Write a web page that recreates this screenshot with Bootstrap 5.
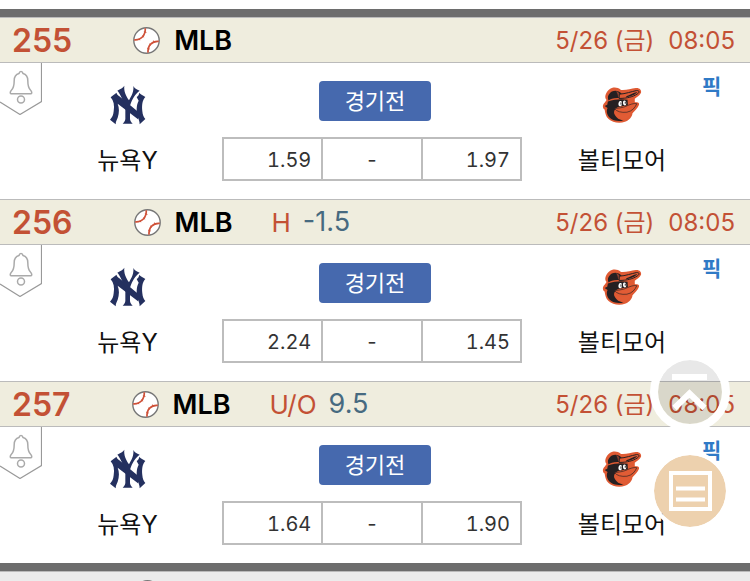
<!DOCTYPE html>
<html lang="ko">
<head>
<meta charset="utf-8">
<meta name="viewport" content="width=device-width, initial-scale=1">
<title>MLB</title>
<link href="https://cdn.jsdelivr.net/npm/bootstrap@5.3.0/dist/css/bootstrap.min.css" rel="stylesheet">
<style>
  body { font-family: Inter, "Noto Sans CJK KR", sans-serif; color: #111; background: #fff; }
  .page-shell { padding-top: 9px; }
  .divider-bar { height: 8px; background: #6d6d6d; flex-shrink: 0; }
  .game-head { background: #efedde; border-top: 1px solid #bbb; border-bottom: 1px solid #bbb; height: 46px; padding: 1px 15px 0 12px; }
  .game-head svg { margin-bottom: 1px; }
  .game-no { color: #c35135; font-size: 32px; font-weight: 600; line-height: 44px; margin-right: 61px; }
  .league { color: #000; font-size: 27px; font-weight: 600; line-height: 44px; margin-left: 14px; }
  .bet-kind { color: #c35135; font-size: 26px; margin-left: 39px; }
  .bet-line { color: #476a80; font-size: 27px; margin-left: 12px; }
  .game-time { color: #c35135; font-size: 24px; gap: 14px; padding-top: 1px; }
  .game-body { display: grid; grid-template-columns: 42px 1fr 300px 1fr 48px; }
  .team { padding-top: 22px; font-size: 24px; line-height: 30px; }
  .team svg { display: block; margin-bottom: 21px; }
  .team-home { padding-right: 9px; }
  .team-away { padding-left: 20px; }
  .center-col { padding: 18px 0; gap: 16px; }
  .state-btn { width: 112px; height: 40px; padding: 0; margin-left: 6px; border-radius: 4px; background: #4669ae; color: #fff; font-size: 22px; line-height: 40px; }
  .state-btn:hover { background: #3b5c9d; color: #fff; }
  .odds { width: 100%; height: 44px; table-layout: fixed; border-collapse: collapse; font-size: 20px; line-height: 24px; color: #333; font-variant-numeric: tabular-nums; }
  .odds td { border: 2px solid #bdbdbd; padding: 2px 10px 0; }
  .pick { color: #2f7ac6; font-size: 21px; font-weight: 600; line-height: 24px; padding-top: 12px; }
  .next-head { background: #ececec; border-top: 1px solid #bbb; padding: 8px 0 0 134px; overflow: hidden; }
  .next-head svg { filter: grayscale(1); }
  .float-tools { right: 20px; bottom: 50px; gap: 19px; }
  .round-btn { width: 80px; height: 80px; padding: 0; border: 4px solid #fff; background: #edd1ae; background-clip: padding-box; }
  .round-btn.to-top { border-width: 8px; background-color: rgba(0, 0, 0, .09); }
  .round-btn svg { display: block; }
</style>
<script src="https://cdn.jsdelivr.net/npm/bootstrap@5.3.0/dist/js/bootstrap.bundle.min.js"></script>
</head>
<body>
<svg class="d-none" aria-hidden="true">
  <symbol id="ball" viewBox="0 0 27 27">
    <circle cx="13.5" cy="13.5" r="12.7" fill="#fff" stroke="#777" stroke-width="1.4"/>
    <path d="M1.200 12.800C8 13.500 12.500 8.500 12.300 1.300M15 25.600C14.500 18.500 19 13.800 25.800 14.400" fill="none" stroke="#cf5138" stroke-width="1.700"/>
    <path d="M6 11.200l.8 2M9.500 8.800l1.600 1.500M10.900 4.800l2.500.6M14.200 21.200l2.500.8M16.200 16.800l1.700 1.500M20.500 13.600l.6 2.400" fill="none" stroke="#cf5138" stroke-width="1"/>
  </symbol>
  <symbol id="bell" viewBox="0 0 42 52">
    <path d="M41.500 0V38.500L20 51.500L0 39" fill="none" stroke="#999" stroke-width="1.200"/>
    <path d="M21 8.500C19.600 8.500 19.200 9.500 19 10.500C15.500 11.500 14.200 14 14.200 17.500C14.200 23 13.500 25.500 11.200 27.500C10 28.800 10 30.800 11 30.800H31C32 30.800 32 28.800 30.800 27.500C28.500 25.500 27.800 23 27.800 17.500C27.800 14 26.500 11.500 23 10.500C22.800 9.500 22.400 8.500 21 8.500Z" fill="none" stroke="#aaa" stroke-width="1.500"/>
    <circle cx="21" cy="36.500" r="3.500" fill="none" stroke="#aaa" stroke-width="1.500"/>
  </symbol>
  <symbol id="ny" viewBox="330 254 108 118">
    <g fill="#24305f">
      <path d="M349 276C346 281 338 283 332 290C341 300 344 315 341 332C340 343 337 350 330 357L347 371C347 363 350 358 353 351C358 336 358 321 353 309L414 356L416 335L358 287C353 284 351 280 349 276Z"/>
      <path d="M418 276C420 281 428 283 436 289C427 298 425 314 427 332C428 343 431 349 436 355L419 371C419 363 417 358 414 351C408 333 409 312 416 300C414 296 411 292 410 289C415 286 417 281 418 276Z"/>
      <path d="M373 255C369 262 361 265 352 270C360 278 365 292 376 315L376 354C376 360 373 363 368 369L398 369C393 363 390 360 390 354L390 315C397 293 406 280 419 270C410 266 403 263 400 256C402 272 395 285 387 299C378 286 371 272 373 255Z"/>
    </g>
  </symbol>
  <symbol id="oriole" viewBox="188 256 122 114">
    <path d="M211 265C219 259 234 257 246 267C261 269 276 262 291 261C303 260 309 267 307 276C303 285 294 290 288 294L288 304C294 306 302 303 301 312C297 324 287 330 281 338C280 350 270 360 258 364C243 370 219 367 208 356C199 348 198 338 196 327C189 322 189 312 196 306L202 298C193 288 201 273 211 265Z" fill="#df5a33"/>
    <path d="M208 299C203 287 209 278 218 272C229 267 240 270 247 278L255 291L235 292C222 293 213 295 208 299Z" fill="#252022"/>
    <path d="M231 271C238 272 243 278 244 288L237 290C237 283 235 277 231 271Z" fill="#8d4030"/>
    <path d="M241 280C260 279 278 272 293 269C303 268 303 275 296 279C283 288 265 293 240 293Z" fill="#df5a33" stroke="#252022" stroke-width="3"/>
    <path d="M262 286C273 282 283 275 296 273C290 281 275 287 262 289Z" fill="#252022"/>
    <path d="M206 302C226 295 249 294 266 297L267 314L237 319C226 324 222 334 227 343C231 352 242 360 254 360C231 365 211 358 205 343C201 334 203 326 205 322L196 316L204 312Z" fill="#252022"/>
    <path d="M226 324C242 322 252 321 261 317C274 311 285 307 294 309C289 321 280 332 264 335C247 337 233 333 226 324Z" fill="#e15c35" stroke="#252022" stroke-width="2"/>
    <path d="M228 338C240 344 261 343 278 334C275 349 262 357 249 356C239 354 230 347 228 338Z" fill="#e15c35"/>
    <path d="M239 305C242 299 249 300 249 306C250 313 247 318 243 317C238 316 237 310 239 305ZM253 301C257 297 262 301 262 307C262 312 260 315 256 314C252 313 251 305 253 301Z" fill="#fff"/>
    <path d="M246 305V312M259 303V309" stroke="#252022" stroke-width="3"/>
  </symbol>
</svg>

<main class="page-shell d-flex flex-column vh-100 overflow-hidden">
  <div class="divider-bar"></div>

  <section>
    <header class="game-head d-flex align-items-center">
      <span class="game-no">255</span>
      <svg width="27" height="27" aria-hidden="true"><use href="#ball"/></svg>
      <span class="league">MLB</span>
      <time class="game-time d-flex ms-auto"><span>5/26 (금)</span><span>08:05</span></time>
    </header>
    <div class="game-body">
      <svg width="42" height="52" aria-hidden="true"><use href="#bell"/></svg>
      <div class="team team-home d-flex flex-column align-items-center">
        <svg width="36" height="40" aria-hidden="true"><use href="#ny"/></svg><span>뉴욕Y</span>
      </div>
      <div class="center-col d-flex flex-column align-items-center">
        <button type="button" class="btn state-btn border-0">경기전</button>
        <table class="odds"><tbody><tr><td class="text-end">1.59</td><td class="text-center">-</td><td class="text-end">1.97</td></tr></tbody></table>
      </div>
      <div class="team team-away d-flex flex-column align-items-center">
        <svg width="40" height="40" aria-hidden="true"><use href="#oriole"/></svg><span>볼티모어</span>
      </div>
      <div><a href="#" class="pick d-inline-block text-decoration-none">픽</a></div>
    </div>
  </section>

  <section>
    <header class="game-head d-flex align-items-center">
      <span class="game-no">256</span>
      <svg width="27" height="27" aria-hidden="true"><use href="#ball"/></svg>
      <span class="league">MLB</span>
      <span class="bet-kind">H</span><span class="bet-line">-1.5</span>
      <time class="game-time d-flex ms-auto"><span>5/26 (금)</span><span>08:05</span></time>
    </header>
    <div class="game-body">
      <svg width="42" height="52" aria-hidden="true"><use href="#bell"/></svg>
      <div class="team team-home d-flex flex-column align-items-center">
        <svg width="36" height="40" aria-hidden="true"><use href="#ny"/></svg><span>뉴욕Y</span>
      </div>
      <div class="center-col d-flex flex-column align-items-center">
        <button type="button" class="btn state-btn border-0">경기전</button>
        <table class="odds"><tbody><tr><td class="text-end">2.24</td><td class="text-center">-</td><td class="text-end">1.45</td></tr></tbody></table>
      </div>
      <div class="team team-away d-flex flex-column align-items-center">
        <svg width="40" height="40" aria-hidden="true"><use href="#oriole"/></svg><span>볼티모어</span>
      </div>
      <div><a href="#" class="pick d-inline-block text-decoration-none">픽</a></div>
    </div>
  </section>

  <section>
    <header class="game-head d-flex align-items-center">
      <span class="game-no">257</span>
      <svg width="27" height="27" aria-hidden="true"><use href="#ball"/></svg>
      <span class="league">MLB</span>
      <span class="bet-kind">U/O</span><span class="bet-line">9.5</span>
      <time class="game-time d-flex ms-auto"><span>5/26 (금)</span><span>08:05</span></time>
    </header>
    <div class="game-body">
      <svg width="42" height="52" aria-hidden="true"><use href="#bell"/></svg>
      <div class="team team-home d-flex flex-column align-items-center">
        <svg width="36" height="40" aria-hidden="true"><use href="#ny"/></svg><span>뉴욕Y</span>
      </div>
      <div class="center-col d-flex flex-column align-items-center">
        <button type="button" class="btn state-btn border-0">경기전</button>
        <table class="odds"><tbody><tr><td class="text-end">1.64</td><td class="text-center">-</td><td class="text-end">1.90</td></tr></tbody></table>
      </div>
      <div class="team team-away d-flex flex-column align-items-center">
        <svg width="40" height="40" aria-hidden="true"><use href="#oriole"/></svg><span>볼티모어</span>
      </div>
      <div><a href="#" class="pick d-inline-block text-decoration-none">픽</a></div>
    </div>
  </section>

  <div class="divider-bar"></div>
  <div class="next-head flex-fill">
    <svg class="d-block" width="27" height="27" aria-hidden="true"><use href="#ball"/></svg>
  </div>
</main>

<div class="float-tools position-fixed d-flex flex-column">
  <button type="button" class="round-btn to-top rounded-circle" aria-label="맨 위로">
    <svg width="64" height="64" viewBox="0 0 64 64" aria-hidden="true"><path d="M14 14H49V20H14Z" fill="#fff"/><path d="M16.500 48L31.500 33.500L46.500 48" fill="none" stroke="#fff" stroke-width="6"/></svg>
  </button>
  <button type="button" class="round-btn rounded-circle" aria-label="목록">
    <svg width="72" height="72" viewBox="0 0 72 72" aria-hidden="true"><path d="M17 18H56V54H17Z" fill="none" stroke="#fff" stroke-width="4"/><path d="M22 33.500H51M22 44.500H51" stroke="#fff" stroke-width="4"/></svg>
  </button>
</div>
</body>
</html>
